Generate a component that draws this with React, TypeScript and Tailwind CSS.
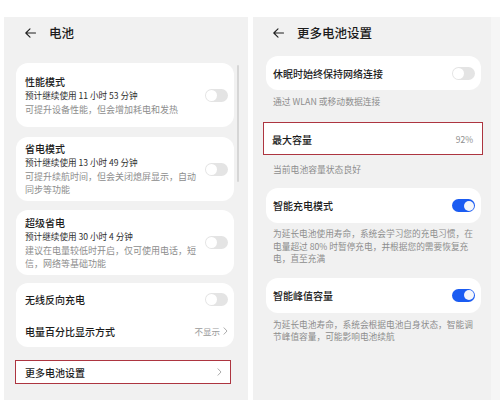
import React from "react";

const font = { fontFamily: '"Noto Sans CJK SC", "Noto Sans", sans-serif' };

function BackArrow() {
  return (
    <svg width="11" height="10" viewBox="0 0 11 10" fill="none" stroke="#1f1f1f" strokeWidth="1.1" strokeLinecap="round" strokeLinejoin="round">
      <path d="M10.5 5H0.8M5 0.8L0.8 5L5 9.2" />
    </svg>
  );
}

function Chevron() {
  return (
    <svg width="5" height="8" viewBox="0 0 5 8" fill="none" stroke="#a3a3a3" strokeWidth="0.9" strokeLinecap="round" strokeLinejoin="round">
      <path d="M1 0.8L4 4L1 7.2" />
    </svg>
  );
}

function Toggle({ on = false }: { on?: boolean }) {
  return on ? (
    <div className="w-[23px] h-[13px] rounded-full bg-[#1b5cf2] flex items-center justify-end pr-[1.5px] shrink-0">
      <div className="w-[10px] h-[10px] rounded-full bg-[#f4f6fb]" />
    </div>
  ) : (
    <div className="w-[23px] h-[13px] rounded-full bg-[#e4e4e4] flex items-center pl-[1px] shrink-0">
      <div className="w-[11px] h-[11px] rounded-full bg-white" />
    </div>
  );
}

function ModeCard({ title, sub, desc, h }: { title: string; sub: string; desc: React.ReactNode; h: string }) {
  return (
    <div className={`bg-white rounded-[12px] ${h} flex items-center pl-[9px] pr-[6px]`}>
      <div className="flex-1 flex flex-col">
        <div className="text-[10px] leading-[14px] font-medium text-[#1c1c1c]">{title}</div>
        <div className="text-[8.6px] leading-[13px] text-[#2e2e2e]">{sub}</div>
        <div className="text-[9px] leading-[13px] text-[#8d8d8d] mt-[1px]">{desc}</div>
      </div>
      <Toggle />
    </div>
  );
}

export default function App() {
  return (
    <div className="w-[500px] h-[400px] bg-white flex pt-[17px] overflow-hidden" style={font}>
      {/* 左：电池 */}
      <div className="ml-[4px] w-[244px] h-[383px] bg-[#f1f1f1] flex flex-col relative">
        <div className="h-[32px] flex items-center pl-[21px] gap-[13px]">
          <BackArrow />
          <span className="text-[12.5px] font-medium text-[#1c1c1c]">电池</span>
        </div>
        <div className="absolute left-[233px] top-[48px] w-[2px] h-[117px] bg-[#d6d6d6] rounded-full" />
        <div className="flex flex-col pl-[12px] pr-[14px] mt-[14px]">
          <ModeCard h="h-[64px]" title="性能模式" sub="预计继续使用 11 小时 53 分钟" desc="可提升设备性能，但会增加耗电和发热" />
          <div className="h-[10px]" />
          <ModeCard
            h="h-[64px]"
            title="省电模式"
            sub="预计继续使用 13 小时 49 分钟"
            desc={<>可提升续航时间，但会关闭熄屏显示，自动<br />同步等功能</>}
          />
          <div className="h-[9px]" />
          <ModeCard
            h="h-[65px]"
            title="超级省电"
            sub="预计继续使用 30 小时 4 分钟"
            desc={<>建议在电量较低时开启，仅可使用电话，短<br />信，网络等基础功能</>}
          />
          <div className="h-[8px]" />
          <div className="bg-white rounded-[12px] h-[64px] flex flex-col pl-[9px] pr-[6px]">
            <div className="h-[32px] flex items-center justify-between">
              <span className="text-[10px] font-medium text-[#1c1c1c]">无线反向充电</span>
              <Toggle />
            </div>
            <div className="h-[32px] flex items-center justify-between">
              <span className="text-[10px] font-medium text-[#1c1c1c]">电量百分比显示方式</span>
              <span className="flex items-center gap-[3px] text-[8.5px] text-[#9a9a9a]">
                不显示
                <Chevron />
              </span>
            </div>
          </div>
          <div className="h-[13px]" />
          <div className="ml-[-1px] mr-[3px] h-[24px] bg-white border-[1.5px] border-[#ad3540] flex items-center justify-between pl-[9px] pr-[8px]">
            <span className="text-[10px] font-medium text-[#1c1c1c]">更多电池设置</span>
            <Chevron />
          </div>
        </div>
      </div>

      {/* 右：更多电池设置 */}
      <div className="ml-[5px] w-[238px] h-[383px] bg-[#f1f1f1] flex flex-col">
        <div className="h-[32px] flex items-center pl-[20px] gap-[13px]">
          <BackArrow />
          <span className="text-[12.5px] font-medium text-[#1c1c1c]">更多电池设置</span>
        </div>
        <div className="flex flex-col pl-[13px] pr-[10px] mt-[7px]">
          <div className="bg-white rounded-[12px] h-[34px] flex items-center justify-between pl-[7px] pr-[6px]">
            <span className="text-[10px] font-medium text-[#1c1c1c]">休眠时始终保持网络连接</span>
            <Toggle />
          </div>
          <div className="pl-[7px] h-[24px] flex items-center text-[8.8px] text-[#8d8d8d]">通过 WLAN 或移动数据连接</div>
          <div className="h-[8px]" />
          <div className="ml-[-3px] mr-[-2px] h-[33px] bg-white border-[1.5px] border-[#ad3540] flex items-center justify-between pl-[8px] pr-[9px] pt-[2px]">
            <span className="text-[10px] font-medium text-[#1c1c1c]">最大容量</span>
            <span className="text-[8.5px] text-[#8d8d8d]">92%</span>
          </div>
          <div className="pl-[7px] h-[30px] flex items-center text-[8.8px] text-[#8d8d8d]">当前电池容量状态良好</div>
          <div className="h-[3px]" />
          <div className="bg-white rounded-[12px] h-[35px] flex items-center justify-between pl-[7px] pr-[6px]">
            <span className="text-[10px] font-medium text-[#1c1c1c]">智能充电模式</span>
            <Toggle on />
          </div>
          <div className="pl-[7px] pt-[5px] text-[8.7px] leading-[12.5px] text-[#8d8d8d]">
            为延长电池使用寿命，系统会学习您的充电习惯，在
            <br />
            电量超过 80% 时暂停充电，并根据您的需要恢复充
            <br />
            电，直至充满
          </div>
          <div className="h-[12px]" />
          <div className="bg-white rounded-[12px] h-[35px] flex items-center justify-between pl-[7px] pr-[6px]">
            <span className="text-[10px] font-medium text-[#1c1c1c]">智能峰值容量</span>
            <Toggle on />
          </div>
          <div className="pl-[7px] pt-[6px] text-[8.7px] leading-[12.5px] text-[#8d8d8d]">
            为延长电池寿命，系统会根据电池自身状态，智能调
            <br />
            节峰值容量，可能影响电池续航
          </div>
        </div>
      </div>
      <div className="w-[9px] h-[383px] bg-[#f6f6f6]" />
    </div>
  );
}
